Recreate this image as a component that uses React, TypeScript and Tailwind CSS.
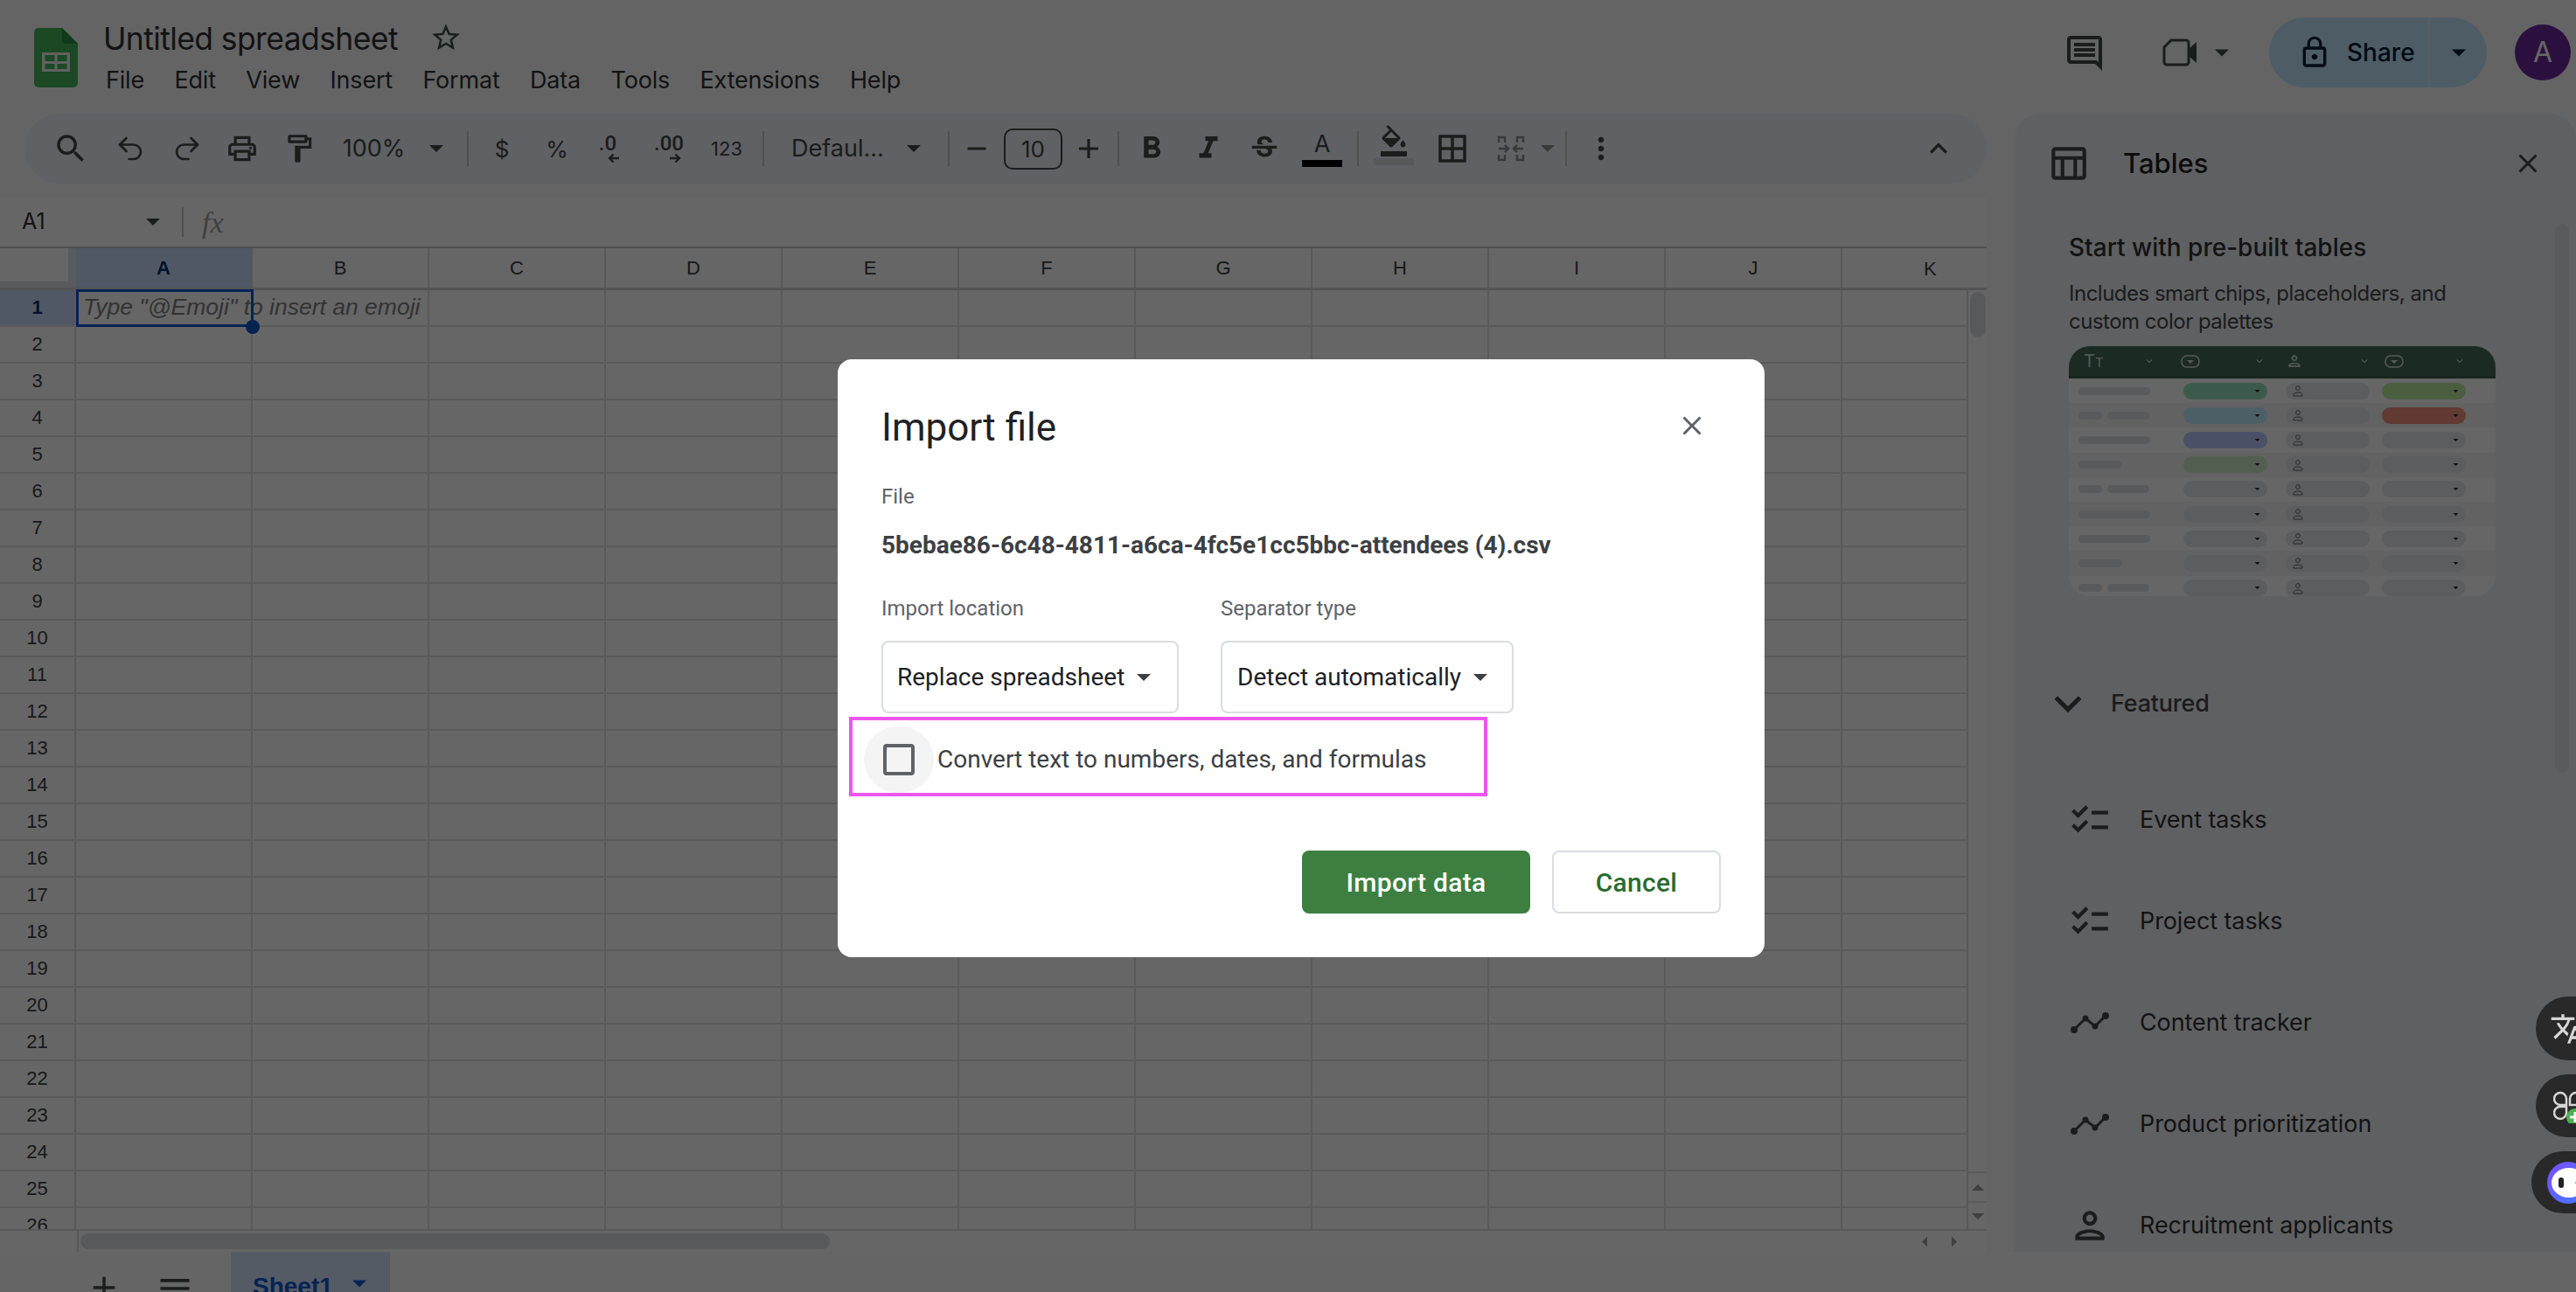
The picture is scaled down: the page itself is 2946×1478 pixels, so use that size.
import {
  MdBorderAll,
  MdChecklist,
  MdClose,
  MdExpandLess,
  MdExpandMore,
  MdFormatBold,
  MdFormatItalic,
  MdLockOutline,
  MdMenu,
  MdMoreVert,
  MdOutlineComment,
  MdOutlineFormatColorFill,
  MdOutlineFormatPaint,
  MdOutlinePerson,
  MdOutlinePrint,
  MdOutlineTableChart,
  MdAdd,
  MdRemove,
  MdSearch,
  MdStarBorder,
  MdStrikethroughS,
  MdTranslate,
} from "react-icons/md";
import { Redo2, Undo2 } from "lucide-react";

const columns = ["A", "B", "C", "D", "E", "F", "G", "H", "I", "J", "K"];
const rows = Array.from({ length: 26 }, (_, i) => i + 1);
const menus = ["File", "Edit", "View", "Insert", "Format", "Data", "Tools", "Extensions", "Help"];

function Caret({ className }: { className: string }) {
  return (
    <svg viewBox="0 0 10 5" className={className} fill="currentColor">
      <path d="M0 0h10L5 5z" />
    </svg>
  );
}

function Sep() {
  return <div className="h-[40px] w-[2px] shrink-0 bg-[#c7c7c7]" />;
}

function Logo() {
  return (
    <svg viewBox="0 0 50 68" className="h-[68px] w-[50px] shrink-0">
      <path d="M5 0h27l18 18v45a5 5 0 0 1-5 5H5a5 5 0 0 1-5-5V5a5 5 0 0 1 5-5z" fill="#43b65a" />
      <path d="M32 0l18 18H36a4 4 0 0 1-4-4z" fill="#2f8d45" />
      <rect x="9" y="28" width="32" height="22" fill="#eef3ee" />
      <rect x="12.5" y="31" width="11" height="7" fill="#43b65a" />
      <rect x="26.5" y="31" width="11" height="7" fill="#43b65a" />
      <rect x="12.5" y="41" width="11" height="6" fill="#43b65a" />
      <rect x="26.5" y="41" width="11" height="6" fill="#43b65a" />
    </svg>
  );
}

function TopBar() {
  return (
    <div className="flex h-[130px] shrink-0 text-[#303133]">
      <div className="pl-[39px] pt-[32px]">
        <Logo />
      </div>
      <div className="pl-[29px] pt-[23px]">
        <div className="flex h-[44px] items-center">
          <span className="font-['Inter',sans-serif] text-[35.5px] tracking-[-0.6px]">Untitled spreadsheet</span>
          <MdStarBorder className="ml-[36px] mt-[-4px] text-[#444746]" size={38} />
        </div>
        <div className="mt-[7px] flex h-[36px] items-center gap-[34.5px] pl-[3px] font-['Inter',sans-serif] text-[27px] tracking-[-0.2px]">
          {menus.map((m) => (
            <span key={m}>{m}</span>
          ))}
        </div>
      </div>
      <div className="ml-auto flex h-[120px] items-center pr-[6px] text-[#444746]">
        <MdOutlineComment size={48} className="mr-[65px] mt-[2px]" />
        <svg viewBox="0 0 40 32" className="mr-[20px] h-[32px] w-[40px]" fill="none" stroke="currentColor" strokeWidth="3">
          <path d="M10 2h17a3 3 0 0 1 3 3v22a3 3 0 0 1-3 3H5a3 3 0 0 1-3-3V10z" />
          <path d="M30 12l9-8v24l-9-8z" fill="currentColor" stroke="none" />
        </svg>
        <Caret className="mr-[46px] h-[9px] w-[16px]" />
        <div className="flex h-[80px] w-[249px] overflow-hidden rounded-full bg-[#c2e7ff] text-[#001d35]">
          <div className="flex w-[182px] items-center pl-[32px]">
            <MdLockOutline size={40} />
            <span className="ml-[17px] font-['Inter',sans-serif] text-[28px] font-medium">Share</span>
          </div>
          <div className="flex flex-1 items-center justify-center border-l-2 border-[#d8f0ff]">
            <Caret className="h-[9px] w-[16px]" />
          </div>
        </div>
        <div className="ml-[32px] flex h-[64px] w-[64px] items-center justify-center rounded-full bg-[#6b289d] font-['Inter',sans-serif] text-[32px] text-[#ffffff]">
          A
        </div>
      </div>
    </div>
  );
}

function SmallArrow({ left }: { left?: boolean }) {
  return (
    <svg viewBox="0 0 14 12" className={left ? "ml-[14px] h-[12px] w-[14px] rotate-180" : "ml-[14px] h-[12px] w-[14px]"} fill="none" stroke="currentColor" strokeWidth="2.4">
      <path d="M1 6h11M7.5 1.5L12 6l-4.5 4.5" />
    </svg>
  );
}

function Toolbar() {
  return (
    <div className="ml-[28px] flex h-[80px] shrink-0 items-center rounded-full bg-[#edf2fa] pl-[19px] text-[#444746]">
      <div className="flex w-[68px] justify-center"><MdSearch size={42} /></div>
      <div className="flex w-[68px] justify-center"><Undo2 size={36} strokeWidth={1.8} /></div>
      <div className="flex w-[62px] justify-center"><Redo2 size={36} strokeWidth={1.8} /></div>
      <div className="flex w-[64px] justify-center"><MdOutlinePrint size={38} /></div>
      <div className="flex w-[66px] justify-center"><MdOutlineFormatPaint size={38} /></div>
      <div className="w-[105px] text-center font-['Inter',sans-serif] text-[27px]">100%</div>
      <div className="flex w-[38px] justify-center"><Caret className="h-[8px] w-[16px]" /></div>
      <div className="w-[16px]" />
      <Sep />
      <div className="w-[76px] text-center font-['Inter',sans-serif] text-[26px]">$</div>
      <div className="w-[50px] text-center font-['Inter',sans-serif] text-[26px]">%</div>
      <div className="flex w-[66px] flex-col items-center font-['Roboto',sans-serif] text-[24px] font-medium leading-[22px]">
        <span>.0</span>
        <SmallArrow left />
      </div>
      <div className="flex w-[74px] flex-col items-center font-['Roboto',sans-serif] text-[24px] font-medium leading-[22px]">
        <span>.00</span>
        <SmallArrow />
      </div>
      <div className="w-[58px] text-center font-['Inter',sans-serif] text-[22px]">123</div>
      <div className="w-[12px]" />
      <Sep />
      <div className="w-[31px]" />
      <div className="w-[105px] font-['Inter',sans-serif] text-[27px]">Defaul...</div>
      <div className="flex w-[70px] justify-center"><Caret className="h-[8px] w-[16px]" /></div>
      <div className="w-[4px]" />
      <Sep />
      <div className="flex w-[62px] justify-center"><MdRemove size={36} /></div>
      <div className="flex h-[47px] w-[67px] items-center justify-center rounded-[10px] border-2 border-[#444746] font-['Inter',sans-serif] text-[26px]">10</div>
      <div className="flex w-[60px] justify-center"><MdAdd size={38} /></div>
      <div className="w-[3px]" />
      <Sep />
      <div className="flex w-[74px] justify-center"><MdFormatBold size={42} /></div>
      <div className="flex w-[56px] justify-center"><MdFormatItalic size={42} /></div>
      <div className="flex w-[72px] justify-center"><MdStrikethroughS size={38} /></div>
      <div className="flex w-[60px] flex-col items-center">
        <span className="font-['Inter',sans-serif] text-[27px] leading-[32px]">A</span>
        <div className="mt-[2px] h-[8px] w-[46px] bg-black" />
      </div>
      <div className="w-[10px]" />
      <Sep />
      <div className="flex w-[80px] flex-col items-center">
        <MdOutlineFormatColorFill size={36} className="mt-[-8px]" />
        <div className="mt-[2px] h-[8px] w-[46px] bg-[#dadce0]" />
      </div>
      <div className="flex w-[54px] justify-center"><MdBorderAll size={42} /></div>
      <div className="w-[16px]" />
      <div className="flex w-[48px] justify-center text-[#8b8e92]">
        <svg viewBox="0 0 32 32" className="h-[32px] w-[32px]" fill="none" stroke="currentColor" strokeWidth="2.5">
          <path d="M9 9V3H2v6M2 23v6h7v-6M23 9V3h7v6M30 23v6h-7v-6M2 16h11M9 12l4 4-4 4M30 16H19M23 12l-4 4 4 4" />
        </svg>
      </div>
      <div className="flex w-[36px] justify-center text-[#8b8e92]"><Caret className="h-[8px] w-[16px]" /></div>
      <div className="w-[2px]" />
      <Sep />
      <div className="flex w-[78px] justify-center"><MdMoreVert size={40} /></div>
      <div className="ml-auto mr-[35px]"><MdExpandLess size={40} /></div>
    </div>
  );
}

function FormulaBar() {
  return (
    <div className="mt-[16px] flex h-[56px] shrink-0 items-center bg-white text-[#444746]">
      <span className="w-[167px] pl-[25px] font-['Inter',sans-serif] text-[25px] text-[#303133]">A1</span>
      <Caret className="h-[8px] w-[16px]" />
      <div className="ml-[25px] h-[34px] w-[2px] bg-[#c7c7c7]" />
      <span className="ml-[21px] font-['Liberation_Serif',serif] text-[34px] italic text-[#a0a0a0]">fx</span>
    </div>
  );
}

function Grid() {
  return (
    <div className="relative flex min-h-0 flex-1 flex-col border-t-2 border-[#c4c7c5] bg-white font-['Liberation_Sans',sans-serif] text-[#3c4043]">
      <div className="flex h-[48px] shrink-0 border-b-[3px] border-[#cfcfcf]">
        <div className="h-[45px] w-[87px] shrink-0 bg-[#dfe1e5]">
          <div className="h-[38px] w-[78px] bg-white" />
        </div>
        {columns.map((c, i) => (
          <div
            key={c}
            className={
              i === 0
                ? "flex h-full w-[202px] shrink-0 items-center justify-center border-r-2 border-[#dcdcdc] bg-[#c6dcfa] text-[22px] font-bold text-[#062e6f]"
                : i === 10
                  ? "flex h-full w-[142px] shrink-0 items-start overflow-hidden pl-[93px] pt-[7px] text-[22px]"
                  : "flex h-full w-[202px] shrink-0 items-center justify-center border-r-2 border-[#dcdcdc] text-[22px]"
            }
          >
            {c}
          </div>
        ))}
      </div>
      <div className="flex min-h-0 flex-1">
        <div className="min-w-0 flex-1 overflow-hidden">
          {rows.map((r) => (
            <div key={r} className="flex h-[42px] border-b-2 border-[#e0e0e0]">
              <div
                className={
                  r === 1
                    ? "flex w-[87px] shrink-0 items-center justify-center border-r-2 border-[#dcdcdc] bg-[#c6dcfa] pb-[2px] text-[22px] font-bold text-[#062e6f]"
                    : "flex w-[87px] shrink-0 items-center justify-center border-r-2 border-[#dcdcdc] pb-[2px] text-[22px]"
                }
              >
                {r}
              </div>
              {columns.map((c) => (
                <div key={c} className="flex w-[202px] shrink-0 items-center border-r-2 border-[#e0e0e0]">
                  {r === 1 && c === "A" && (
                    <span className="whitespace-nowrap pl-[8px] text-[26.5px] italic text-[#808080]">
                      Type "@Emoji" to insert an emoji
                    </span>
                  )}
                </div>
              ))}
            </div>
          ))}
        </div>
        <div className="flex w-[23px] shrink-0 flex-col items-center border-l-2 border-[#dcdcdc] bg-white pt-[2px]">
          <div className="h-[52px] w-[18px] rounded-full bg-[#dcdfe4]" />
          <div className="mt-auto flex w-full flex-col items-center text-[#a0a0a0]">
            <div className="flex h-[34px] w-full items-center justify-center border-t-2 border-[#e0e0e0]">
              <Caret className="h-[7px] w-[14px] rotate-180" />
            </div>
            <div className="flex h-[32px] w-full items-center justify-center border-t-2 border-[#e0e0e0]">
              <Caret className="h-[7px] w-[14px]" />
            </div>
          </div>
        </div>
      </div>
      <div className="flex h-[26px] shrink-0 items-center border-t-2 border-[#dcdcdc]">
        <div className="h-full w-[90px] shrink-0 border-r-2 border-[#dcdcdc]" />
        <div className="ml-[2px] h-[18px] w-[857px] rounded-full bg-[#dcdfe4]" />
        <Caret className="ml-[1246px] h-[7px] w-[12px] rotate-90 text-[#a0a0a0]" />
        <Caret className="ml-[22px] h-[7px] w-[12px] -rotate-90 text-[#a0a0a0]" />
      </div>
      {/* selection on A1 */}
      <div className="absolute left-[87px] top-[47px] h-[43px] w-[203px] border-[3px] border-[#0b57d0]" />
      <div className="absolute left-[281px] top-[82px] h-[16px] w-[16px] rounded-full bg-[#0b57d0]" />
    </div>
  );
}

function ChipIcon() {
  return (
    <svg viewBox="0 0 22 15" className="h-[15px] w-[22px]" fill="none" stroke="#cfe0d8" strokeWidth="1.5">
      <rect x="1" y="1" width="20" height="13" rx="6" />
      <path d="M7 6h8l-4 4z" fill="#cfe0d8" stroke="none" />
    </svg>
  );
}

function PersonSmall() {
  return (
    <svg viewBox="0 0 12 14" className="ml-[8px] h-[14px] w-[12px]" fill="none" stroke="#5f6368" strokeWidth="1">
      <circle cx="6" cy="4" r="2.4" />
      <path d="M1 13v-1.5C1 10 3.5 9 6 9s5 1 5 2.5V13z" />
    </svg>
  );
}

type PreviewRow = { name: number; b: string; d: string };
const preview: PreviewRow[] = [
  { name: 0, b: "bg-[#96e1bc]", d: "bg-[#bbeba0]" },
  { name: 1, b: "bg-[#c0edff]", d: "bg-[#f29180]" },
  { name: 0, b: "bg-[#b9c8ff]", d: "bg-[#e6e8ed]" },
  { name: 2, b: "bg-[#cdeec8]", d: "bg-[#e6e8ed]" },
  { name: 1, b: "bg-[#e6e8ed]", d: "bg-[#e6e8ed]" },
  { name: 0, b: "bg-[#e6e8ed]", d: "bg-[#e6e8ed]" },
  { name: 0, b: "bg-[#e6e8ed]", d: "bg-[#e6e8ed]" },
  { name: 2, b: "bg-[#e6e8ed]", d: "bg-[#e6e8ed]" },
  { name: 1, b: "bg-[#e6e8ed]", d: "bg-[#e6e8ed]" },
];

function PreviewTable() {
  return (
    <div className="ml-[62px] mt-[12px] h-[286px] w-[488px] shrink-0 overflow-hidden rounded-[24px] bg-white">
      <div className="grid h-[37px] grid-cols-[120px_117px_110px_96px] items-center border-b-[3px] border-[#3a5c4d] bg-[#46695a] pl-[11px] text-[#cfe0d8]">
        <div className="flex items-center justify-between pl-[6px] pr-[32px]">
          <span className="font-['Inter',sans-serif] text-[20px] leading-none">
            T<span className="text-[15px]">T</span>
          </span>
          <MdExpandMore size={14} />
        </div>
        <div className="-ml-[3px] flex items-center justify-between pr-[23px]">
          <ChipIcon />
          <MdExpandMore size={14} />
        </div>
        <div className="flex items-center justify-between pr-[13px]">
          <MdOutlinePerson size={20} />
          <MdExpandMore size={14} />
        </div>
        <div className="flex items-center justify-between pl-[3px]">
          <ChipIcon />
          <MdExpandMore size={14} />
        </div>
      </div>
      {preview.map((row, i) => (
        <div
          key={i}
          className={
            i % 2 === 0
              ? "grid h-[28.2px] grid-cols-[120px_117px_110px_96px] items-center pl-[11px]"
              : "grid h-[28.2px] grid-cols-[120px_117px_110px_96px] items-center bg-[#f6f6f6] pl-[11px]"
          }
        >
          <div className="flex gap-[6px]">
            {row.name === 0 && <div className="h-[9px] w-[82px] rounded-full bg-[#dfe1e5]" />}
            {row.name === 1 && (
              <>
                <div className="h-[9px] w-[27px] rounded-full bg-[#dfe1e5]" />
                <div className="h-[9px] w-[48px] rounded-full bg-[#dfe1e5]" />
              </>
            )}
            {row.name === 2 && <div className="h-[9px] w-[50px] rounded-full bg-[#dfe1e5]" />}
          </div>
          <div className={`flex h-[19px] w-[96px] items-center justify-end rounded-full pr-[8px] text-[#202124] ${row.b}`}>
            <Caret className="h-[3px] w-[7px]" />
          </div>
          <div className="flex h-[19px] w-[96px] items-center rounded-full bg-[#e6e8ed]">
            <PersonSmall />
          </div>
          <div className={`flex h-[19px] w-[96px] items-center justify-end rounded-full pr-[8px] text-[#202124] ${row.d}`}>
            <Caret className="h-[3px] w-[7px]" />
          </div>
        </div>
      ))}
    </div>
  );
}

function TrendIcon() {
  return (
    <svg viewBox="0 0 44 24" className="h-[24px] w-[44px]" fill="none" stroke="#444746" strokeWidth="3">
      <path d="M4 20l13-13 11 9L40 4" />
      <circle cx="4" cy="20" r="4" fill="#444746" stroke="none" />
      <circle cx="17" cy="7" r="3.5" fill="#444746" stroke="none" />
      <circle cx="28" cy="16" r="3.5" fill="#444746" stroke="none" />
      <circle cx="40" cy="4" r="4" fill="#444746" stroke="none" />
    </svg>
  );
}

const templates = [
  { label: "Event tasks", icon: <MdChecklist size={50} /> },
  { label: "Project tasks", icon: <MdChecklist size={50} /> },
  { label: "Content tracker", icon: <TrendIcon /> },
  { label: "Product prioritization", icon: <TrendIcon /> },
  { label: "Recruitment applicants", icon: <MdOutlinePerson size={50} /> },
];

function SidePanel() {
  return (
    <div className="relative ml-[32px] flex min-w-0 flex-1 flex-col overflow-hidden rounded-t-[30px] bg-[#eef0f5] font-['Inter',sans-serif] text-[#444746]">
      <div className="mt-[37px] flex h-[40px] shrink-0 items-center pl-[36px] pr-[37px]">
        <MdOutlineTableChart size={50} />
        <span className="ml-[38px] text-[31px] font-medium text-[#1f1f1f]">Tables</span>
        <MdClose size={36} className="ml-auto" />
      </div>
      <h2 className="ml-[62px] mt-[58px] text-[28px] font-medium leading-[36px] text-[#303133]">Start with pre-built tables</h2>
      <p className="ml-[62px] mt-[19px] w-[470px] text-[24px] leading-[32px] tracking-[-0.5px]">
        Includes smart chips, placeholders, and custom color palettes
      </p>
      <PreviewTable />
      <div className="ml-[30px] mt-[103px] flex h-[40px] shrink-0 items-center">
        <MdExpandMore size={62} />
        <span className="ml-[18px] text-[27px] font-medium tracking-[-0.2px]">Featured</span>
      </div>
      <div className="mt-[93px] flex flex-col gap-[76px]">
        {templates.map((t) => (
          <div key={t.label} className="flex h-[40px] shrink-0 items-center">
            <div className="flex w-[143px] shrink-0 justify-center pl-[29px]">{t.icon}</div>
            <span className="text-[27px] tracking-[-0.1px] text-[#303133]">{t.label}</span>
          </div>
        ))}
      </div>
      <div className="absolute right-[8px] top-[126px] h-[628px] w-[16px] rounded-full bg-[#e2e4e9]" />
    </div>
  );
}

function BottomBar() {
  return (
    <div className="flex h-[46px] shrink-0 items-start overflow-hidden bg-[#fcfcfc] font-['Liberation_Sans',sans-serif] text-[#444746]">
      <MdAdd size={42} className="ml-[98px] mt-[20px]" />
      <MdMenu size={44} className="ml-[38px] mt-[20px]" />
      <div className="ml-[42px] flex h-[46px] w-[182px] items-start bg-[#d3e3fd] pl-[25px] pt-[24px] text-[#0b57d0]">
        <span className="text-[28px] font-bold leading-[32px]">Sheet1</span>
        <Caret className="ml-[22px] mt-[8px] h-[9px] w-[16px]" />
      </div>
    </div>
  );
}

function ImportDialog() {
  return (
    <div className="absolute left-[958px] top-[411px] h-[684px] w-[1060px] rounded-[16px] bg-white pl-[50px] pr-[50px] pt-[50px] font-['Roboto',sans-serif] text-[#3c4043]">
      <div className="flex h-[56px] items-center justify-between">
        <h1 className="font-['Roboto',sans-serif] text-[44px] leading-[56px] text-[#202124]">Import file</h1>
        <MdClose size={36} className="mr-[15px] mt-[-4px] text-[#5f6368]" />
      </div>
      <div className="mt-[35px] text-[24px] leading-[32px] text-[#5f6368]">File</div>
      <div className="mt-[22px] text-[28px] font-bold leading-[36px]">5bebae86-6c48-4811-a6ca-4fc5e1cc5bbc-attendees (4).csv</div>
      <div className="mt-[38px] flex text-[24px] leading-[32px] text-[#5f6368]">
        <span className="w-[388px]">Import location</span>
        <span>Separator type</span>
      </div>
      <div className="mt-[21px] flex gap-[48px] text-[28px] text-[#202124]">
        <div className="flex h-[83px] w-[340px] items-center rounded-[8px] border-2 border-[#dadce0] pl-[16px]">
          Replace spreadsheet
          <Caret className="ml-[14px] h-[8px] w-[16px] text-[#3c4043]" />
        </div>
        <div className="flex h-[83px] w-[335px] items-center rounded-[8px] border-2 border-[#dadce0] pl-[17px]">
          Detect automatically
          <Caret className="ml-[14px] h-[8px] w-[16px] text-[#3c4043]" />
        </div>
      </div>
      <div className="-ml-[37px] mt-[4px] flex h-[91px] w-[730px] items-center border-[4px] border-[#ee55ee] pt-[7px]">
        <div className="ml-[13px] flex h-[76px] w-[80px] items-center justify-center rounded-full bg-[#f4f4f4]">
          <div className="h-[36px] w-[36px] rounded-[4px] border-[4px] border-[#5f6368]" />
        </div>
        <span className="ml-[4px] text-[28px]">Convert text to numbers, dates, and formulas</span>
      </div>
      <div className="mt-[62px] flex justify-end gap-[25px] text-[30px] font-medium tracking-[0.3px]">
        <div className="flex h-[72px] w-[261px] items-center justify-center rounded-[8px] bg-[#3c7f40] text-white">Import data</div>
        <div className="flex h-[72px] w-[193px] items-center justify-center rounded-[8px] border-2 border-[#dadce0] text-[#2b6b30]">Cancel</div>
      </div>
    </div>
  );
}

function FloatingButtons() {
  return (
    <div className="absolute right-0 top-[1140px] flex flex-col items-end gap-[16px]">
      <div className="flex h-[73px] w-[46px] items-center overflow-hidden rounded-l-full bg-[#29292a] pl-[16px] text-[#d6d6d6]">
        <MdTranslate size={40} className="shrink-0" />
      </div>
      <div className="flex h-[72px] w-[46px] items-center overflow-hidden rounded-l-full bg-[#29292a] pl-[20px]">
        <svg viewBox="0 0 40 40" className="h-[40px] w-[40px] shrink-0" fill="none" stroke="#d6d6d6" strokeWidth="2.5">
          <path d="M8 5a7 7 0 0 1 7 7v7H8a7 7 0 0 1 0-14zM8 21h7v7a7 7 0 1 1-7-7zM26 5a7 7 0 0 0-7 7v7h7a7 7 0 0 0 0-14z" />
          <circle cx="25" cy="33" r="10" fill="#4caf50" stroke="none" />
          <path d="M25 27v12M19 33h12" stroke="#fff" strokeWidth="3" />
        </svg>
      </div>
      <div className="flex h-[71px] w-[51px] items-center overflow-hidden rounded-l-full bg-[#29292a] pl-[18px]">
        <svg viewBox="0 0 48 48" className="h-[48px] w-[48px] shrink-0">
          <defs>
            <linearGradient id="ring" x1="0" y1="0" x2="1" y2="1">
              <stop offset="0" stopColor="#7c4dff" />
              <stop offset="1" stopColor="#3f7bff" />
            </linearGradient>
          </defs>
          <circle cx="24" cy="24" r="24" fill="url(#ring)" />
          <ellipse cx="25" cy="24" rx="20" ry="17" fill="#fff" />
          <rect x="13" y="18" width="6" height="12" rx="3" fill="#202124" />
          <path d="M32 24l6-5v10z" fill="#202124" />
        </svg>
      </div>
    </div>
  );
}

export default function App() {
  return (
    <div className="relative flex h-[1478px] w-[2946px] flex-col overflow-hidden bg-[#f9fbfd] font-['Roboto',sans-serif]">
      <TopBar />
      <div className="flex min-h-0 flex-1">
        <div className="flex w-[2272px] shrink-0 flex-col">
          <Toolbar />
          <FormulaBar />
          <Grid />
        </div>
        <SidePanel />
      </div>
      <BottomBar />
      <div className="absolute inset-0 bg-black/60" />
      <ImportDialog />
      <FloatingButtons />
    </div>
  );
}
